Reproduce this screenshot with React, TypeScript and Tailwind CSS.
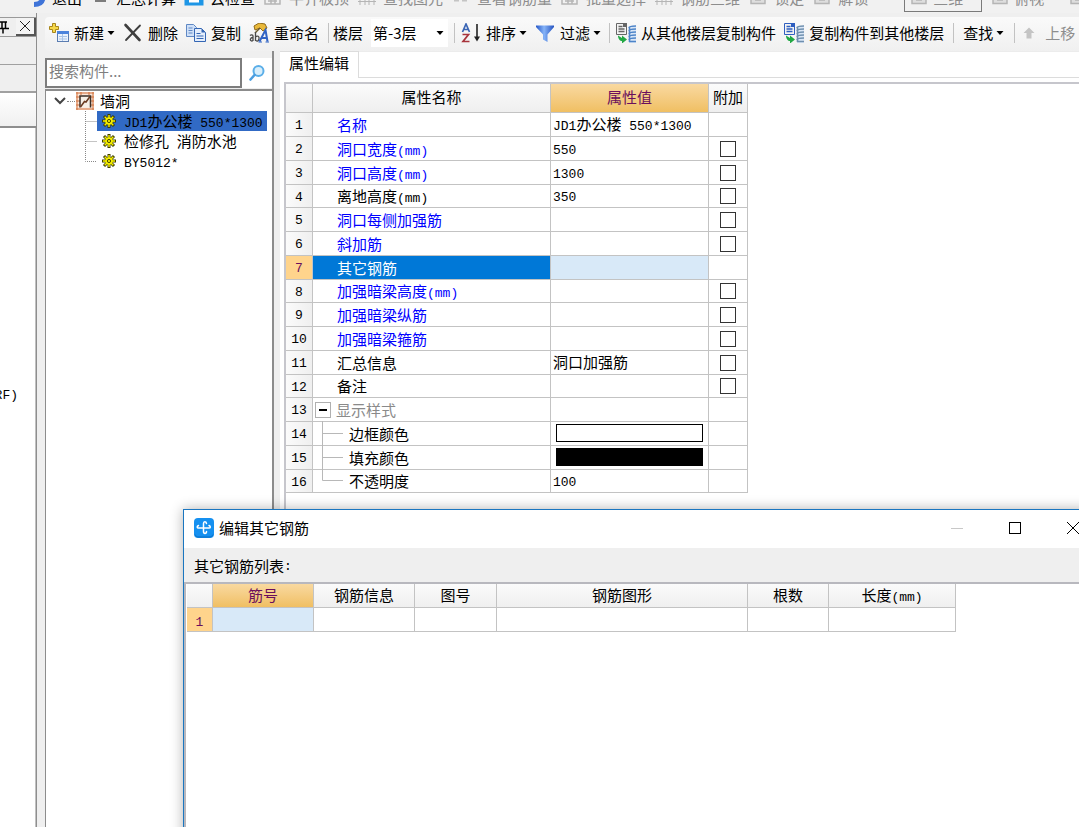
import type { ReactNode } from "react";

const CJK = "font-['Noto_Sans_CJK_SC',sans-serif]";
const LINE = "border-[#c3c3c3]";

/** Sets Latin runs in a smaller monospace face so they sit evenly beside the Chinese text. */
function Mixed({ text }: { text: string }) {
  return (
    <>
      {text.split(/([\x20-\x7e]+)/).map((part, i) =>
        i % 2 ? (
          <span key={i} className="whitespace-pre font-['Liberation_Mono',monospace] text-[13px] leading-none">
            {part}
          </span>
        ) : (
          part
        ),
      )}
    </>
  );
}

/* ---------- icons ---------- */

function Caret() {
  return (
    <svg className="h-2 w-2 shrink-0" viewBox="0 0 8 8">
      <path d="M0.5 2h7L4 6z" fill="#000" />
    </svg>
  );
}

function NewIcon() {
  return (
    <svg className="h-5 w-5 shrink-0" viewBox="0 0 20 20">
      <rect x="8.5" y="8.5" width="11" height="10" fill="#eaf2fc" stroke="#5b7db1" />
      <rect x="8" y="8" width="12" height="3" fill="#4b83dc" />
      <path d="M10 13.5h8M10 16h8M13.5 11v7" stroke="#a9c4e8" />
      <path d="M3.5 0.5h3v3h3v3h-3v3h-3v-3h-3v-3h3z" fill="#f6d84a" stroke="#a8861c" />
    </svg>
  );
}

function DeleteIcon() {
  return (
    <svg className="h-5 w-5 shrink-0" viewBox="0 0 20 20">
      <path d="M2.5 2l14 15" stroke="#3f3f3f" strokeWidth="2.6" strokeLinecap="round" />
      <path d="M17 2.5L3 17" stroke="#3f3f3f" strokeWidth="1.8" strokeLinecap="round" />
    </svg>
  );
}

function CopyIcon() {
  return (
    <svg className="h-5 w-5 shrink-0" viewBox="0 0 20 20">
      <path d="M0.5 1.5h7l3 3v9h-10z" fill="#cfe0f8" stroke="#5f88c4" />
      <path d="M2.5 5h4M2.5 7.5h4M2.5 10h4" stroke="#5f88c4" />
      <path d="M8.5 5.5h7l4 4v9h-11z" fill="#e4eefc" stroke="#3466b4" />
      <path d="M15.5 5.5v4h4z" fill="#3466b4" />
      <path d="M10.5 10.5h4M10.5 13h7M10.5 15.5h7" stroke="#3466b4" />
    </svg>
  );
}

function RenameIcon() {
  return (
    <svg className="h-5 w-5 shrink-0" viewBox="0 0 20 20">
      <path d="M5 3l5-3 6 1 2 4-4 3-3-3-5 2z" fill="#e9b93a" stroke="#8f6a1a" />
      <path d="M11 5l-5 5" stroke="#6d5a2a" strokeWidth="1.5" />
      <g fill="none" stroke="#4a4a4a" strokeWidth="1.3">
        <path d="M1 12.5c1-1 3-1 3 .5v5M4 14.5c-3 0-3.500 3.500-1.200 3.500 .7 0 1.200-.8 1.200-1.300" />
        <path d="M6.500 9v9M6.500 14c2-2 4-.5 3.500 2s-2.500 2.500-3.500 1.200" />
      </g>
      <path d="M10.500 18.500L16.500 7l2 11.500M12.500 15h5.500" fill="none" stroke="#2f62c4" strokeWidth="2" />
      <path d="M9.500 19h3.500M16.500 19h3.500" stroke="#2f62c4" />
    </svg>
  );
}

function SortIcon() {
  return (
    <svg className="h-5 w-5 shrink-0" viewBox="0 0 20 20">
      <g fill="none" strokeWidth="1.7">
        <path d="M1.500 9L5 1l3.500 8M3 6.500h4" stroke="#3b66b5" />
        <path d="M1.500 11.500h6L2 18.500h6.500" stroke="#a8343c" />
      </g>
      <path d="M16 1v16" stroke="#222" strokeWidth="1.6" />
      <path d="M13 13.500h6l-3 5z" fill="#222" />
    </svg>
  );
}

function FilterIcon() {
  return (
    <svg className="h-5 w-5 shrink-0" viewBox="0 0 20 20">
      <defs>
        <linearGradient id="funnel" x1="0" x2="1">
          <stop offset="0" stopColor="#2456c8" />
          <stop offset=".45" stopColor="#86b4f8" />
          <stop offset="1" stopColor="#2452c0" />
        </linearGradient>
      </defs>
      <path d="M1 2.500h18v1.500l-6.500 7.500v7.500l-4.500-2.500v-5L1 4z" fill="url(#funnel)" />
    </svg>
  );
}

function FloorCopyIcon({ sheet, floors }: { sheet: string; floors: string }) {
  return (
    <svg className="h-5 w-5 shrink-0" viewBox="0 0 20 20">
      <path d="M0.500 0.500h10v11h-10z" fill="#f3f3f3" stroke={sheet} />
      <path d="M7 0h4v4H7z" fill={sheet} />
      <path d="M2.500 3.500h4M2.500 6h6M2.500 8.500h6" stroke={sheet} strokeWidth="1.3" />
      <path d="M2 12.500l4 2.500v-2.500l5 4-5 4V18c-2 0-4-2-4-5.500z" fill="#22a844" />
      <path d="M13 4.500l7-2v17.500h-7z" fill="#d9e6f6" />
      <path
        d="M20 3c-3 0-7 0-7 2M20 6c-3 0-7 0-7 2M20 9c-3 0-7 0-7 2M20 12c-3 0-7 0-7 2M20 15c-3 0-7 0-7 2M20 18.500h-7M13.500 5v14"
        fill="none"
        stroke={floors}
        strokeWidth="1.6"
      />
    </svg>
  );
}

function UpIcon() {
  return (
    <svg className="h-3 w-3 shrink-0" viewBox="0 0 12 12">
      <path d="M6 .5L11.500 6H8.500v5.500h-5V6H.5z" fill="#c4c4c4" />
    </svg>
  );
}

function SearchIcon() {
  return (
    <svg className="h-4 w-4" viewBox="0 0 16 16">
      <circle cx="9.5" cy="6" r="5" fill="#d8eefb" stroke="#5aaee8" strokeWidth="2" />
      <path d="M5.5 10L1.5 14.5" stroke="#4b9ee0" strokeWidth="2.6" strokeLinecap="round" />
    </svg>
  );
}

function WallIcon() {
  return (
    <svg className="h-[18px] w-[18px] shrink-0" viewBox="0 0 18 18">
      <rect width="18" height="18" fill="#fbe6d8" />
      <path d="M0 1h18M0 5h18M0 9h18M0 13h18M0 17h18M1 0v18M17 0v18M5 0v3M13 0v3" stroke="#d0703c" />
      <path d="M4 4h11v11.500H4z" fill="#f6efe6" />
      <path d="M4 15.500V4h10.500v11.500" fill="none" stroke="#3c3028" strokeWidth="1.5" />
      <path d="M4.500 15L8.500 9.500l1.500.5 4-5.500" fill="none" stroke="#6a3a20" strokeWidth="1.5" />
    </svg>
  );
}

function GearIcon() {
  return (
    <svg className="h-[14px] w-[14px] shrink-0" viewBox="0 0 14 14">
      <g stroke="#3d3d00" strokeWidth="3">
        <path d="M7 0v14M0 7h14M2 2l10 10M12 2L2 12" />
      </g>
      <g stroke="#f4ee00" strokeWidth="1.4">
        <path d="M7 1v12M1 7h12M2.700 2.700l8.600 8.600M11.300 2.700l-8.600 8.600" />
      </g>
      <circle cx="7" cy="7" r="3.8" fill="#f4ee00" />
      <circle cx="7" cy="7" r="1.6" fill="#f4ee00" stroke="#4a4a00" />
    </svg>
  );
}

function AppIcon() {
  return (
    <svg className="h-5 w-5 shrink-0" viewBox="0 0 20 20">
      <rect width="20" height="20" rx="4" fill="#1590f0" />
      <path d="M1 16.500c1 2 2 2.500 4 2.500h10c2 0 3-.5 4-2.500" fill="none" stroke="#0b6fc4" />
      <g fill="none" stroke="#fff" strokeWidth="1.5" strokeLinecap="round">
        <path d="M12.500 5.500c-.5-2.500-3-2.500-3 0v8c0 2.500 3 2.500 3 0" />
        <path d="M4.500 7.500c-2 1-1.500 2.500 0 2.500h10.500c1.500 0 2-1.500 0-2.500" />
      </g>
    </svg>
  );
}

/* ---------- toolbars ---------- */

const upperTools = [
  { text: "退出", on: true, color: "#3f74d8" },
  { text: "汇总计算", on: true, color: "#555555" },
  { text: "云检查", on: true, color: "#1e96e6" },
  { text: "平齐板顶", on: false, color: "#b5b5b5" },
  { text: "查找图元", on: false, color: "#b5b5b5" },
  { text: "查看钢筋量", on: false, color: "#c4c4c4" },
  { text: "批量选择", on: false, color: "#b5b5b5" },
  { text: "钢筋三维", on: false, color: "#b5b5b5" },
  { text: "锁定", on: false, color: "#b5b5b5" },
  { text: "解锁", on: false, color: "#b5b5b5" },
];

function UpperGlyph({ text, color }: { text: string; color: string }) {
  return (
    <svg className="h-5 w-5 shrink-0" viewBox="0 0 20 20" fill="none" stroke={color}>
      {text === "退出" && <path d="M8 16.500c6 0 9-3 9-8" strokeWidth="5" />}
      {text === "汇总计算" && <path d="M5 13h11" strokeWidth="1.5" />}
      {text === "云检查" && (
        <>
          <rect x="1" y="2" width="18" height="15" fill={color} />
          <path d="M5 13h10" stroke="#ffffff" strokeWidth="3" />
        </>
      )}
      {text === "查看钢筋量" && <path d="M3 12.500h5M11 12.500h5" strokeWidth="2" />}
      {(text === "平齐板顶" || text === "批量选择") && <path d="M2 3v13h15V8M5 13h9M8 16v-6M12 16v-6" strokeWidth="1.5" />}
      {(text === "查找图元" || text === "钢筋三维") && <path d="M1 10h18M1 13.500h18M3 4v13M8 4v13M12 4v13M17 4v13" />}
      {text.length === 2 && text !== "退出" && (
        <path d="M3 5h14v10.500H3zM7 12h6" strokeWidth="1.5" fill="#dedede" />
      )}
    </svg>
  );
}

function UpperToolbar() {
  return (
    <div className="flex h-[13px] shrink-0 items-end gap-2 overflow-hidden bg-[#f1f1f1] pb-[5px] pl-[26px]">
      {upperTools.map((t) => (
        <button
          key={t.text}
          className={`flex shrink-0 items-center gap-[6px] leading-5 ${t.on ? "text-black" : "text-[#8d8d8d]"}`}
        >
          <UpperGlyph text={t.text} color={t.color} />
          {t.text}
        </button>
      ))}
      <button className="-mb-1 ml-7 flex h-6 w-[78px] shrink-0 items-center gap-1 border border-[#7a7a7a] px-1 pb-1 text-[#8d8d8d]">
        <UpperGlyph text="三维" color="#b5b5b5" />
        三维
      </button>
      <button className="flex shrink-0 items-center gap-1 leading-5 text-[#8d8d8d]">
        <UpperGlyph text="俯视" color="#b5b5b5" />
        俯视
      </button>
      <button aria-label="动态观察" className="ml-4 shrink-0">
        <UpperGlyph text="观察" color="#b5b5b5" />
      </button>
    </div>
  );
}

function Tool({ icon, text, menu }: { icon?: ReactNode; text: string; menu?: boolean }) {
  return (
    <button className="flex shrink-0 items-center whitespace-nowrap">
      {icon}
      <span className={icon ? "ml-[5px]" : ""}>{text}</span>
      {menu && <span className="ml-[3px]"><Caret /></span>}
    </button>
  );
}

const group = "flex h-5 shrink-0 items-center gap-2 border-l border-[#c2c2c2]";

function Toolbar() {
  return (
    <div className="flex h-[34px] shrink-0 items-center gap-2 overflow-hidden rounded-l bg-gradient-to-b from-[#fafafa] to-[#f0f0f0] pb-0.5 pl-1">
      <Tool icon={<NewIcon />} text="新建" menu />
      <Tool icon={<DeleteIcon />} text="删除" />
      <Tool icon={<CopyIcon />} text="复制" />
      <Tool icon={<RenameIcon />} text="重命名" />
      <div className={`${group} ml-px pl-1`}>
        <label htmlFor="floor">楼层</label>
        <div className="relative -mr-0.5 flex items-center">
          <select id="floor" className="h-7 w-[77px] appearance-none bg-white pl-0.5">
            <option>第-3层</option>
          </select>
          <span className="pointer-events-none absolute right-1"><Caret /></span>
        </div>
      </div>
      <div className={`${group} pl-[6px]`}>
        <Tool icon={<SortIcon />} text="排序" menu />
        <Tool icon={<FilterIcon />} text="过滤" menu />
      </div>
      <div className={`${group} pl-[6px]`}>
        <Tool icon={<FloorCopyIcon sheet="#666666" floors="#4d84c8" />} text="从其他楼层复制构件" />
        <Tool icon={<FloorCopyIcon sheet="#2f5fc0" floors="#6f8fae" />} text="复制构件到其他楼层" />
      </div>
      <div className={`${group} ml-px pl-[9px]`}>
        <Tool text="查找" menu />
      </div>
      <div className={`${group} ml-0.5 pl-2 text-[#8d8d8d]`}>
        <button className="flex shrink-0 items-center gap-[10px]">
          <UpIcon />
          上移
        </button>
      </div>
    </div>
  );
}

/* ---------- left side ---------- */

function DockPanel() {
  return (
    <aside className="flex w-[37px] shrink-0 flex-col border-r border-[#8e8e8e] pt-1">
      <div className="flex h-5 items-center justify-between border-y border-[#9a9a9a]">
        <svg className="h-4 w-[10px]" viewBox="0 0 10 16">
          <path d="M0 3h7M2 3v6M5.500 3v6M0 9.500h9M3 9.500v5" fill="none" stroke="#000" strokeWidth="1.5" />
        </svg>
        <button aria-label="关闭" className="flex h-[18px] w-5 items-center justify-center border-r-2 border-b-2 border-[#555] bg-[#f4f4f4]">
          <svg className="h-3 w-3" viewBox="0 0 12 12">
            <path d="M1 1l10 10M11 1L1 11" stroke="#222" />
          </svg>
        </button>
      </div>
      <div className="h-7 border-b border-[#a0a0a0]" />
      <div className="h-7 border-b-2 border-[#a0a0a0]" />
      <div className="h-[35px] border-b-2 border-[#8e8e8e] bg-gradient-to-b from-white to-[#f0f0f0]" />
      <div className="flex-1 overflow-hidden border-r border-[#c0c0c0] bg-white pt-[261px]">
        <div className="flex w-[18px] justify-end">
          <Mixed text="RF)" />
        </div>
      </div>
    </aside>
  );
}

const components = [
  { name: "JD1办公楼 550*1300", selected: true },
  { name: "检修孔 消防水池", selected: false },
  { name: "BY5012*", selected: false },
];

function ComponentPanel() {
  return (
    <section className="flex w-[229px] shrink-0 flex-col border-r-2 border-[#8c8c8c] pt-[7px]">
      <div className="flex h-[30px] shrink-0">
        <input
          aria-label="搜索构件"
          placeholder="搜索构件..."
          className="w-[197px] border-2 border-[#7d7d7d] bg-white px-0.5 pb-1 placeholder:text-[#7f7f7f]"
        />
        <button aria-label="搜索" className="flex flex-1 items-center justify-center bg-white">
          <SearchIcon />
        </button>
      </div>
      <div className="mt-px flex-1 border-t-2 border-l border-[#8c8c8c] bg-white">
        <div className="flex h-5 items-center pl-2">
          <svg className="h-3 w-3" viewBox="0 0 12 12">
            <path d="M1 3l5 5 5-5" fill="none" stroke="#444" strokeWidth="2" />
          </svg>
          <span className="mx-px w-2 border-t border-dotted border-[#888]" />
          <WallIcon />
          <span className="ml-[6px]">墙洞</span>
        </div>
        <ul>
          {components.map((c, i) => (
            <li key={c.name} className="flex h-5 items-center pl-[39px]">
              <svg className="h-5 w-3 shrink-0" viewBox="0 0 12 20">
                <path
                  d={i === components.length - 1 ? "M.5 0v10.500H12" : "M.5 0v20M.5 10.500H12"}
                  fill="none"
                  stroke="#888"
                  strokeDasharray="1 1"
                />
              </svg>
              <span
                className={`flex h-5 items-center gap-2 whitespace-nowrap pr-1 pl-[5px] ${c.selected ? "bg-[#316ac5]" : ""}`}
              >
                <GearIcon />
                <span><Mixed text={c.name} /></span>
              </span>
            </li>
          ))}
        </ul>
      </div>
    </section>
  );
}

/* ---------- property grid ---------- */

type Kind = "key" | "plain" | "active" | "group" | "child" | "lastChild";

interface Property {
  name: string;
  kind: Kind;
  value?: string;
  swatch?: string;
  extra?: boolean;
}

const properties: Property[] = [
  { name: "名称", kind: "key", value: "JD1办公楼 550*1300" },
  { name: "洞口宽度(mm)", kind: "key", value: "550", extra: true },
  { name: "洞口高度(mm)", kind: "key", value: "1300", extra: true },
  { name: "离地高度(mm)", kind: "plain", value: "350", extra: true },
  { name: "洞口每侧加强筋", kind: "key", extra: true },
  { name: "斜加筋", kind: "key", extra: true },
  { name: "其它钢筋", kind: "active" },
  { name: "加强暗梁高度(mm)", kind: "key", extra: true },
  { name: "加强暗梁纵筋", kind: "key", extra: true },
  { name: "加强暗梁箍筋", kind: "key", extra: true },
  { name: "汇总信息", kind: "plain", value: "洞口加强筋", extra: true },
  { name: "备注", kind: "plain", extra: true },
  { name: "显示样式", kind: "group" },
  { name: "边框颜色", kind: "child", swatch: "bg-white" },
  { name: "填充颜色", kind: "child", swatch: "bg-black" },
  { name: "不透明度", kind: "lastChild", value: "100" },
];

const nameStyle: Record<Kind, string> = {
  key: "text-[#0000ff]",
  plain: "text-black",
  active: "bg-[#0078d7] text-white",
  group: "text-[#8a8a8a]",
  child: "text-black",
  lastChild: "text-black",
};

function Branch({ kind }: { kind: Kind }) {
  if (kind === "group") {
    return (
      <button aria-label="折叠" className="mr-[5px] ml-[2px] flex h-4 w-4 items-center justify-center border border-[#b0b0b0] bg-white">
        <span className="h-0.5 w-2 bg-black" />
      </button>
    );
  }
  if (kind === "child" || kind === "lastChild") {
    return (
      <svg className="mr-[6px] h-5 w-[30px] overflow-visible" viewBox="0 0 30 20">
        <path d={kind === "child" ? "M9.500 -3v26M9.500 9.500H30" : "M9.500 -3v12.500H30"} fill="none" stroke="#b8b8b8" />
      </svg>
    );
  }
  return <span className="w-6" />;
}

const headCell = `border-r border-b ${LINE} bg-gradient-to-b from-[#fbfbfb] to-[#efefef] p-0 pb-0.5 font-normal`;
const headActive = `border-r border-b ${LINE} bg-gradient-to-b from-[#f9d9a0] to-[#f0bf62] p-0 pb-0.5 font-normal text-[#6a0f5c]`;
const cell = `border-r border-b ${LINE} p-0`;

function PropertyPanel() {
  return (
    <section className="flex min-w-0 flex-1 flex-col bg-white">
      <div role="tablist" className="flex h-[27px] shrink-0">
        <button role="tab" aria-selected="true" className="w-[79px] border-t border-r border-[#dcdcdc] pb-1">
          属性编辑
        </button>
        <div className="flex-1 border-t border-b border-t-[#ececec] border-b-[#dcdcdc]" />
      </div>
      <div className="mt-1 ml-1 flex-1 border-t-2 border-l-2 border-[#c6c6cc]">
        <table className="w-[462px] table-fixed border-separate border-spacing-0">
          <colgroup>
            <col className="w-[27px]" />
            <col className="w-[238px]" />
            <col className="w-[158px]" />
            <col className="w-[39px]" />
          </colgroup>
          <thead>
            <tr className="h-[29px]">
              <th className={headCell} />
              <th className={headCell}>属性名称</th>
              <th className={headActive}>属性值</th>
              <th className={headCell}>附加</th>
            </tr>
          </thead>
          <tbody className="leading-5">
            {properties.map((p, i) => {
              const active = p.kind === "active";
              return (
                <tr key={p.name} className={i % 4 === 3 ? "h-[23px]" : "h-6"}>
                  <th
                    scope="row"
                    className={`border-r border-b ${LINE} p-0 pb-0.5 font-normal leading-4 ${active ? "bg-[#ffd48c] text-[#6a0f5c]" : "bg-gradient-to-r from-[#fbfbfb] to-[#efefef]"}`}
                  >
                    <Mixed text={String(i + 1)} />
                  </th>
                  <td className={`${cell} ${nameStyle[p.kind]}`}>
                    <div className="flex h-5 items-center whitespace-nowrap">
                      <Branch kind={p.kind} />
                      <span><Mixed text={p.name} /></span>
                    </div>
                  </td>
                  <td className={`${cell} px-0.5 pb-0.5 ${active ? "bg-[#d8e9f8]" : ""}`}>
                    {p.value && <Mixed text={p.value} />}
                    {p.swatch && <div className={`mr-[3px] ml-[3px] h-[18px] border border-black ${p.swatch}`} />}
                  </td>
                  <td className={cell}>
                    {p.extra && (
                      <input
                        type="checkbox"
                        aria-label={`${p.name} 附加`}
                        className="mx-auto block h-4 w-4 appearance-none border border-[#333] bg-white"
                      />
                    )}
                  </td>
                </tr>
              );
            })}
          </tbody>
        </table>
      </div>
    </section>
  );
}

/* ---------- dialog ---------- */

function RebarDialog() {
  return (
    <div
      role="dialog"
      aria-labelledby="rebar-title"
      className="absolute top-[509px] -right-4 -bottom-4 left-[183px] flex flex-col border border-[#1a76c0] bg-white shadow-[0_0_12px_rgba(0,0,0,0.3)]"
    >
      <header className="flex h-[38px] shrink-0 items-center pb-0.5 pl-[10px]">
        <AppIcon />
        <h2 id="rebar-title" className="ml-[5px] flex-1">编辑其它钢筋</h2>
        <button aria-label="最小化" className="flex w-[58px] justify-center">
          <span className="h-px w-3 bg-[#c8c8c8]" />
        </button>
        <button aria-label="最大化" className="flex w-[58px] justify-center">
          <span className="h-3 w-3 border border-black" />
        </button>
        <button aria-label="关闭" className="mr-[-8px] flex w-[58px] justify-center">
          <svg className="h-3 w-3" viewBox="0 0 12 12">
            <path d="M0 0l12 12M12 0L0 12" stroke="#000" />
          </svg>
        </button>
      </header>
      <div className="flex h-[34px] shrink-0 items-center bg-[#efefef] pt-0.5 pl-[10px]">
        <Mixed text="其它钢筋列表:" />
      </div>
      <div className="flex-1 border-t-2 border-l-2 border-[#b8b8be] pl-px">
        <table className="w-[769px] table-fixed border-separate border-spacing-0">
          <colgroup>
            <col className="w-[26px]" />
            <col className="w-[101px]" />
            <col className="w-[101px]" />
            <col className="w-[82px]" />
            <col className="w-[251px]" />
            <col className="w-[81px]" />
            <col className="w-[127px]" />
          </colgroup>
          <thead>
            <tr className="h-6">
              <th className={headCell} />
              <th className={headActive}>筋号</th>
              <th className={headCell}>钢筋信息</th>
              <th className={headCell}>图号</th>
              <th className={headCell}>钢筋图形</th>
              <th className={headCell}>根数</th>
              <th className={headCell}><Mixed text="长度(mm)" /></th>
            </tr>
          </thead>
          <tbody>
            <tr className="h-6">
              <th scope="row" className={`${cell} bg-[#ffd48c] font-normal text-[#6a0f5c]`}>
                <Mixed text="1" />
              </th>
              <td className={`${cell} bg-[#d8e9f8]`} />
              <td className={cell} />
              <td className={cell} />
              <td className={cell} />
              <td className={cell} />
              <td className={cell} />
            </tr>
          </tbody>
        </table>
      </div>
    </div>
  );
}

export default function App() {
  return (
    <div className={`relative flex h-screen flex-col overflow-hidden bg-[#efefef] text-[15px] leading-5 text-black ${CJK}`}>
      <UpperToolbar />
      <div className="flex min-h-0 flex-1">
        <DockPanel />
        <main className="ml-2 flex min-w-0 flex-1 flex-col pt-1">
          <Toolbar />
          <div className="flex min-h-0 flex-1 gap-[6px]">
            <ComponentPanel />
            <PropertyPanel />
          </div>
        </main>
      </div>
      <RebarDialog />
    </div>
  );
}
